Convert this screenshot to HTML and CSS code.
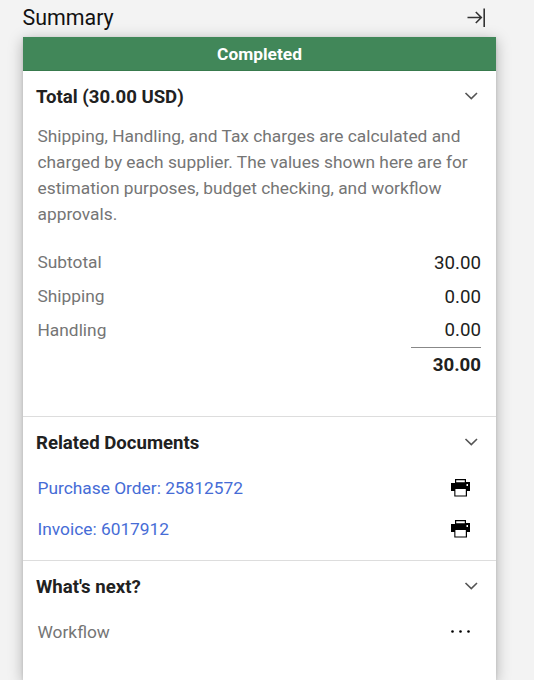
FILE: index.html
```html
<!DOCTYPE html>
<html lang="en">
<head>
<meta charset="utf-8">
<title>Summary</title>
<link rel="stylesheet" href="styles.css">
</head>
<body>
<header class="top">
  <h1>Summary</h1>
  <svg class="collapse" width="20" height="20" viewBox="0 0 20 20"><path d="M1.5 9.5H15.5M9.8 4L15.3 9.5L9.8 15M18.2 .5V19"/></svg>
</header>
<main class="panel">
  <div class="status">Completed</div>
  <section class="total">
    <div class="head"><h2>Total (30.00 USD)</h2><svg class="chev" width="14" height="8" viewBox="0 0 14 8"><path d="M1.5 1L7.3 6.6L13 1"/></svg></div>
    <p class="note">Shipping, Handling, and Tax charges are calculated and<br>charged by each supplier. The values shown here are for<br>estimation purposes, budget checking, and workflow<br>approvals.</p>
    <div class="row"><span>Subtotal</span><span class="num">30.00</span></div>
    <div class="row"><span>Shipping</span><span class="num">0.00</span></div>
    <div class="row"><span>Handling</span><span class="num last">0.00</span></div>
    <div class="sum">30.00</div>
  </section>
  <section class="docs">
    <div class="head"><h2>Related Documents</h2><svg class="chev" width="14" height="8" viewBox="0 0 14 8"><path d="M1.5 1L7.3 6.6L13 1"/></svg></div>
    <div class="doc"><a>Purchase Order: 25812572</a><svg class="print" width="20" height="18" viewBox="0 0 20 18"><path fill-rule="evenodd" d="M5 0H16V3H20V12H17V17.5H4.3V12H1V4H5ZM6.2 1.3V3.3H14.8V1.3ZM5.4 10V16.4H15.8V10ZM16.5 5V7H18V5Z"/></svg></div>
    <div class="doc"><a>Invoice: 6017912</a><svg class="print" width="20" height="18" viewBox="0 0 20 18"><path fill-rule="evenodd" d="M5 0H16V3H20V12H17V17.5H4.3V12H1V4H5ZM6.2 1.3V3.3H14.8V1.3ZM5.4 10V16.4H15.8V10ZM16.5 5V7H18V5Z"/></svg></div>
  </section>
  <section class="next">
    <div class="head"><h2>What's next?</h2><svg class="chev" width="14" height="8" viewBox="0 0 14 8"><path d="M1.5 1L7.3 6.6L13 1"/></svg></div>
    <div class="flow"><span>Workflow</span><svg class="dots" width="20" height="4" viewBox="0 0 20 4"><circle cx="2.5" cy="1.5" r="1.3"/><circle cx="10.5" cy="1.5" r="1.3"/><circle cx="18.5" cy="1.5" r="1.3"/></svg></div>
  </section>
</main>
</body>
</html>
```
FILE: styles.css
```css
* { box-sizing: border-box; }
body { margin: 0; height: 680px; overflow: hidden; background: #f3f3f3; font-family: Roboto, sans-serif; font-size: 17.33px; color: #757575; display: flex; flex-direction: column; }
h1, h2, p { margin: 0; }
svg { flex: none; }
.top { height: 37px; flex: none; padding: 0 48px 2px 22.5px; display: flex; align-items: center; justify-content: space-between; }
h1 { font-size: 21.4px; font-weight: 400; color: #111; }
.collapse { fill: none; stroke: #333; stroke-width: 1.6; }
.panel { flex: 1; margin: 0 38px 0 23px; background: #fff; box-shadow: 0 3px 14px rgba(0,0,0,.28), 0 1px 3px rgba(0,0,0,.12); }
.status { height: 34px; line-height: 34px; background: #418759; border-bottom: 1px solid #387a4d; color: #fff; font-weight: 700; text-align: center; }
.head { display: flex; height: 50px; align-items: center; justify-content: space-between; padding: 0 18px 0 13px; }
h2 { padding-top: 2px; font-size: 18.6px; font-weight: 700; color: #212121; }
.chev { fill: none; stroke: #555; stroke-width: 1.6; }
.total { height: 345px; }
.note { padding: 2px 0 0 14.5px; line-height: 26px; white-space: nowrap; }
.row { display: flex; justify-content: space-between; align-items: center; height: 34px; padding: 0 15px 0 14.5px; }
.note + .row { margin-top: 18px; }
.num { padding-top: 2px; font-size: 18.7px; color: #212121; }
.num.last { padding-top: 0; }
.sum { width: 70px; margin: 0 15px 0 auto; border-top: 1px solid #888; font-size: 18.7px; font-weight: 700; color: #212121; text-align: right; line-height: 34px; }
.docs, .next { border-top: 1px solid #ddd; }
.docs { height: 144px; }
.doc, .flow { display: flex; align-items: center; justify-content: space-between; height: 41px; padding: 0 26px 0 14.5px; }
.doc a { color: #466cd6; }
.print, .dots { fill: #000; }
```
